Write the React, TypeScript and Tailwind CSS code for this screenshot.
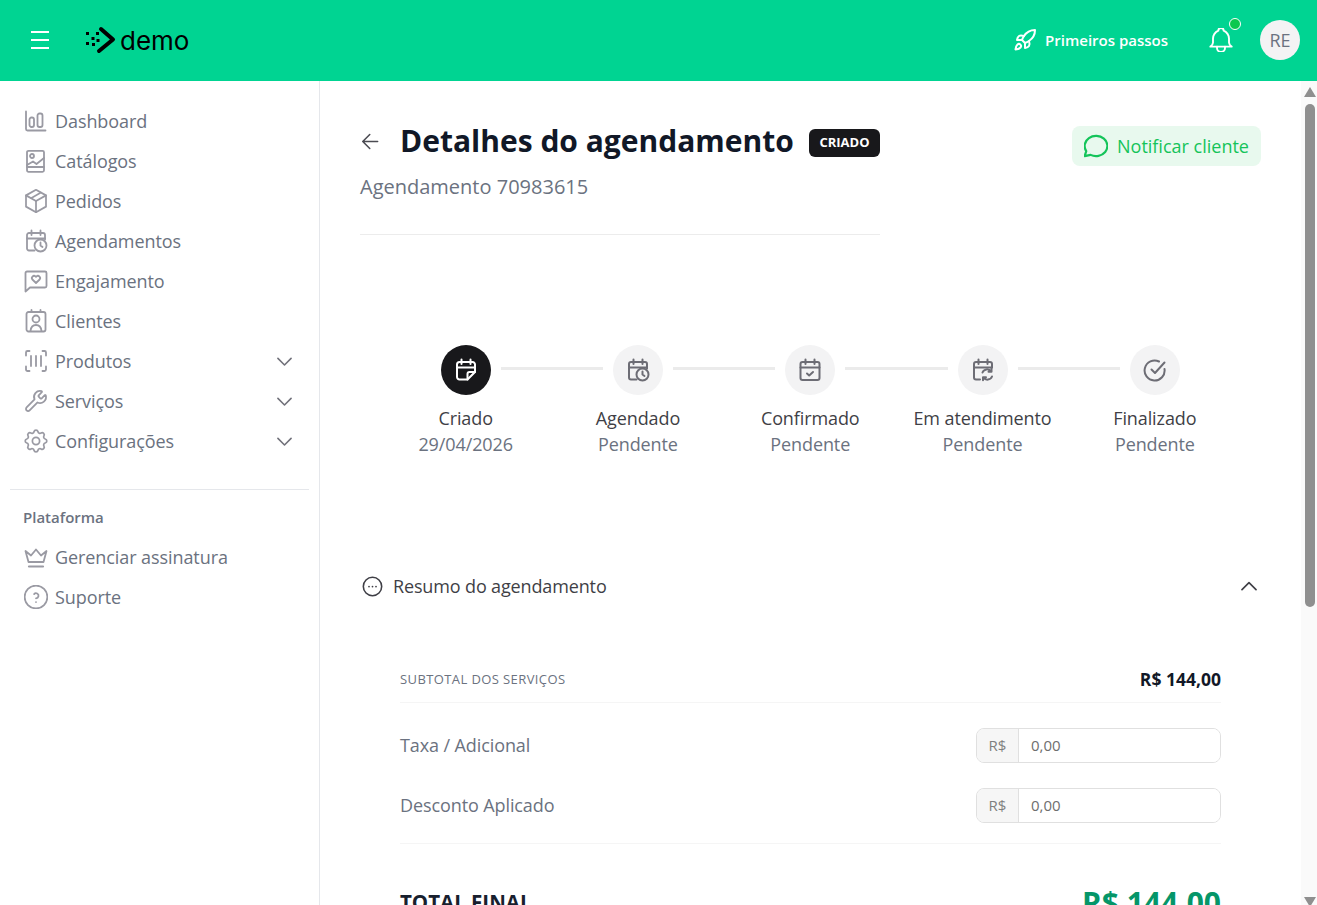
import type { ReactNode } from "react";
import { Rocket, Wrench } from "lucide-react";
import { TbBell, TbHelpCircle, TbMessageCircle, TbPackage, TbSettings } from "react-icons/tb";

type IconProps = { className?: string };

function Svg({ className, sw = 1.8, children }: IconProps & { sw?: number; children: ReactNode }) {
  return (
    <svg viewBox="0 0 24 24" fill="none" stroke="currentColor" strokeWidth={sw} strokeLinecap="round" strokeLinejoin="round" className={className}>
      {children}
    </svg>
  );
}

const DashboardIcon = ({ className }: IconProps) => (
  <Svg className={className}>
    <path d="M2 2.500v17.500a1.500 1.500 0 0 0 1.500 1.500H21.500" />
    <rect x="5.500" y="8.500" width="4.500" height="9.500" rx="2" />
    <rect x="13.500" y="4.500" width="5" height="13.500" rx="2" />
  </Svg>
);

const CatalogIcon = ({ className }: IconProps) => (
  <Svg className={className}>
    <rect x="3" y="1.800" width="17" height="21" rx="1.500" />
    <path d="M3 18h17" />
    <path d="M3 16l6-3.500 3.500 2.500 7.500-6" />
    <circle cx="8" cy="7" r="2" />
  </Svg>
);

const PackageIcon = ({ className }: IconProps) => <TbPackage viewBox="2.400 2.400 19.200 19.200" strokeWidth={1.4} className={className} />;
const SettingsIcon = ({ className }: IconProps) => <TbSettings viewBox="2 2 20 20" strokeWidth={1.45} className={className} />;
const HelpIcon = ({ className }: IconProps) => <TbHelpCircle viewBox="2.500 2.500 19 19" strokeWidth={1.4} className={className} />;
const WrenchIcon = ({ className }: IconProps) => <Wrench strokeWidth={1.8} className={className} />;

const CalendarClockIcon = ({ className }: IconProps) => (
  <Svg className={className}>
    <path d="M10.500 21.500H5a2 2 0 0 1-2-2V6a2 2 0 0 1 2-2h14a2 2 0 0 1 2 2v4.500" />
    <path d="M7.500 1.500V6M16.500 1.500V6M3 9.500h18" />
    <circle cx="16.500" cy="16.500" r="6" />
    <path d="M16.500 13.500v3l2 1.500" />
  </Svg>
);

const CalendarRepeatIcon = ({ className }: IconProps) => (
  <Svg className={className}>
    <path d="M9 21.500H5a2 2 0 0 1-2-2V6a2 2 0 0 1 2-2h14a2 2 0 0 1 2 2v3.500" />
    <path d="M7.500 1.500V6M16.500 1.500V6M3 9.500h18" />
    <path d="M11.500 14.500a4.800 4.800 0 0 1 8.500-1M20.500 10.800v3h-3" />
    <path d="M21 18.500a4.800 4.800 0 0 1-8.500 1M12 22.300v-3h3" />
  </Svg>
);

const CalendarUserIcon = ({ className }: IconProps) => (
  <Svg className={className}>
    <rect x="2.500" y="3" width="19" height="19.500" rx="2" />
    <path d="M7.500 1v2M16.500 1v2" />
    <circle cx="12" cy="10" r="3.500" />
    <path d="M6.500 22c.4-4 2.500-6 5.500-6s5.100 2 5.500 6" />
  </Svg>
);

const MessageHeartIcon = ({ className }: IconProps) => (
  <Svg className={className}>
    <path d="M1.500 22.500V4a1.500 1.500 0 0 1 1.500-1.500h18A1.500 1.500 0 0 1 22.500 4v13a1.500 1.500 0 0 1-1.500 1.500H6z" />
    <path d="M12 14l-3.600-3.500a2.200 2.200 0 0 1 3.100-3.100l.5.5.5-.5a2.200 2.200 0 0 1 3.100 3.100z" />
  </Svg>
);

const BarcodeIcon = ({ className }: IconProps) => (
  <Svg className={className}>
    <path d="M5.500 2H3.500A1.500 1.500 0 0 0 2 3.500v3M18.500 2h2A1.500 1.500 0 0 1 22 3.500v3M5.500 22H3.500A1.500 1.500 0 0 1 2 20.500v-3M18.500 22h2a1.500 1.500 0 0 0 1.500-1.500v-3" />
    <path d="M7 7v10M12 7v10M17 7v10" />
  </Svg>
);

const CrownIcon = ({ className }: IconProps) => (
  <Svg className={className}>
    <path d="M5 21.500h14" strokeWidth={2.200} />
    <path d="M4.500 17h15L22.500 6 17 10.500 12 4.500 7 10.500 1.500 6z" />
  </Svg>
);

const CalendarNoteIcon = ({ className }: IconProps) => (
  <Svg className={className}>
    <path d="M13.500 21.500H5.500a2.500 2.500 0 0 1-2.500-2.500V6.500A2.500 2.500 0 0 1 5.500 4h13A2.500 2.500 0 0 1 21 6.500V14z" />
    <path d="M7.500 1.500V6M16.500 1.500V6M3 9.500h18M21 14h-5.500a2 2 0 0 0-2 2v5.500" />
  </Svg>
);

const CalendarCheckIcon = ({ className }: IconProps) => (
  <Svg className={className}>
    <rect x="2.500" y="4" width="19" height="18" rx="2" />
    <path d="M7.500 1.500V6M16.500 1.500V6M2.500 9.500h19M9 15.500l2.200 2 3.800-3.500" />
  </Svg>
);

const CircleCheckIcon = ({ className }: IconProps) => (
  <Svg className={className}>
    <path d="M21.500 11a10 10 0 1 1-5.500-7.500" />
    <path d="M8.500 11.500l3.500 3.500 9.500-10.500" />
  </Svg>
);

const ArrowLeftIcon = ({ className }: IconProps) => (
  <Svg className={className}>
    <path d="M2 12H19M10 4 2 12l8 8" />
  </Svg>
);

const Chevron = ({ className, up }: IconProps & { up?: boolean }) => (
  <Svg className={className} sw={2.500}>
    <path d={up ? "M1.500 17.500 12 7l10.500 10.500" : "M1.500 7 12 17.500 22.500 7"} />
  </Svg>
);

const navItems = [
  { label: "Dashboard", icon: DashboardIcon },
  { label: "Catálogos", icon: CatalogIcon },
  { label: "Pedidos", icon: PackageIcon },
  { label: "Agendamentos", icon: CalendarClockIcon },
  { label: "Engajamento", icon: MessageHeartIcon },
  { label: "Clientes", icon: CalendarUserIcon },
  { label: "Produtos", icon: BarcodeIcon, more: true },
  { label: "Serviços", icon: WrenchIcon, more: true },
  { label: "Configurações", icon: SettingsIcon, more: true },
];

const platformItems = [
  { label: "Gerenciar assinatura", icon: CrownIcon },
  { label: "Suporte", icon: HelpIcon },
];

const steps = [
  { label: "Criado", detail: "29/04/2026", icon: CalendarNoteIcon, active: true },
  { label: "Agendado", detail: "Pendente", icon: CalendarClockIcon },
  { label: "Confirmado", detail: "Pendente", icon: CalendarCheckIcon },
  { label: "Em atendimento", detail: "Pendente", icon: CalendarRepeatIcon },
  { label: "Finalizado", detail: "Pendente", icon: CircleCheckIcon },
];

function NavRow({ label, icon: Icon, more }: { label: string; icon: (p: IconProps) => ReactNode; more?: boolean }) {
  return (
    <a className="flex h-10 items-center pr-[27px] pl-6 text-lg tracking-[-0.08px] text-[#6b7280]">
      <Icon className="size-6 shrink-0 text-[#9a9aa3]" />
      <span className="ml-[7px] flex-1">{label}</span>
      {more && <Chevron className="size-[15px] text-[#71717a]" />}
    </a>
  );
}

function Header() {
  return (
    <header className="flex h-[81px] shrink-0 items-center bg-[#00d492] pr-[17px] pb-px pl-[30px]">
      <svg viewBox="0 0 20 18" className="h-[18px] w-5 text-white" fill="none" stroke="currentColor" strokeWidth={2}>
        <path d="M1 1h18M1 9h18M1 17h18" />
      </svg>
      <div className="ml-[36px] flex items-center">
        <svg viewBox="0 0 30 28" className="h-7 w-[30px] text-black">
          <g fill="currentColor">
            <rect x="0" y="6" width="3" height="3" />
            <rect x="0" y="16" width="3" height="3" />
            <rect x="5.500" y="11" width="3" height="3" />
            <rect x="6" y="17" width="3" height="3" />
            <rect x="10" y="6" width="3" height="3" />
            <rect x="10.500" y="13" width="3" height="3" />
          </g>
          <path d="M15 3 27 13.500 13 25" fill="none" stroke="currentColor" strokeWidth={4} strokeLinecap="round" strokeLinejoin="round" />
        </svg>
        <span className="mt-[1px] ml-[4px] font-['Inter',sans-serif] text-[26px] leading-none text-black">demo</span>
      </div>
      <div className="ml-auto flex items-center">
        <Rocket strokeWidth={2} className="size-6 text-white" />
        <span className="ml-[8px] text-[15px] font-semibold text-white">Primeiros passos</span>
        <div className="relative ml-[41px]">
          <TbBell viewBox="3 3 18 18" strokeWidth={1.4} className="size-6 text-white" />
          <span className="absolute -top-[10px] -right-[8px] size-3 rounded-full border border-white bg-[#0bc84f]" />
        </div>
        <div className="ml-[27px] flex size-10 items-center justify-center rounded-full bg-[#f3f3f4] text-lg text-[#6b7280]">RE</div>
      </div>
    </header>
  );
}

function Sidebar() {
  return (
    <aside className="w-[320px] shrink-0 border-r border-[#e5e7eb] bg-white pt-5">
      <nav>
        {navItems.map((item) => (
          <NavRow key={item.label} {...item} />
        ))}
      </nav>
      <div className="mx-[10px] mt-[28px] border-t border-[#e5e7eb] pt-[17px]">
        <p className="pl-[13px] text-[15px] leading-[21px] font-semibold text-[#6b7280]">Plataforma</p>
      </div>
      <div className="mt-[9px]">
        {platformItems.map((item) => (
          <NavRow key={item.label} {...item} />
        ))}
      </div>
    </aside>
  );
}

function Stepper() {
  return (
    <ol className="mt-[110px] mr-5 ml-[19.5px] flex tracking-[-0.1px]">
      {steps.map((step, i) => {
        const Icon = step.icon;
        return (
          <li key={step.label} className="flex flex-1 flex-col items-center">
            <div className="flex w-full items-center">
              <span className={`mr-[10px] mb-1 h-[3px] flex-1 ${i > 0 ? "bg-[#ebebeb]" : ""}`} />
              <span className={`flex size-[50px] items-center justify-center rounded-full ${step.active ? "bg-[#18181b] text-white" : "bg-[#f3f3f4] text-[#6d6d75]"}`}>
                <Icon className="size-6 [&_*]:[stroke-width:2]" />
              </span>
              <span className={`mb-1 ml-[10px] h-[3px] flex-1 ${i < steps.length - 1 ? "bg-[#ebebeb]" : ""}`} />
            </div>
            <p className="mt-[10px] text-lg leading-[26px] text-[#3f3f46]">{step.label}</p>
            <p className="text-lg leading-[26px] text-[#6b7280]">{step.detail}</p>
          </li>
        );
      })}
    </ol>
  );
}

function MoneyField({ label }: { label: string }) {
  return (
    <div className="flex h-[35px] items-center justify-between">
      <span className="mb-[2px] text-lg tracking-[-0.1px] text-[#6b7280]">{label}</span>
      <div className="flex h-[35px] w-[245px] overflow-hidden rounded-lg border border-[#e0e0e0] text-[15px]">
        <span className="flex w-[42px] items-center justify-center border-r border-[#e0e0e0] bg-[#f6f6f6] text-[#808080]">R$</span>
        <input readOnly value="0,00" className="min-w-0 flex-1 bg-white pl-3 text-[#6e6e6e] outline-none" />
      </div>
    </div>
  );
}

function Summary() {
  return (
    <section className="mt-[114px]">
      <div className="flex h-[30px] items-center pr-1 pl-[2px]">
        <Svg className="size-[21px] text-[#3f3f46]">
          <circle cx="12" cy="12" r="10.500" />
          <path d="M8 12h.01M12 12h.01M16 12h.01" strokeWidth={2} />
        </Svg>
        <h2 className="ml-[10px] flex-1 text-lg tracking-[-0.14px] text-[#3f3f46]">Resumo do agendamento</h2>
        <Chevron up className="size-4 text-[#3f3f46]" />
      </div>
      <div className="mx-10 mt-[65px]">
        <div className="flex h-[37px] items-start justify-between border-b border-[#f5f5f5]">
          <span className="mt-1 text-[13px] tracking-[0.4px] text-[#6b7280] uppercase">Subtotal dos serviços</span>
          <span className="mt-px text-[17.5px] leading-6 font-bold text-[#111827]">R$ 144,00</span>
        </div>
        <div className="mt-[25px] flex flex-col gap-[25px] border-b border-[#f5f5f5] pb-5">
          <MoneyField label="Taxa / Adicional" />
          <MoneyField label="Desconto Aplicado" />
        </div>
        <div className="mt-[39px] flex items-center justify-between pb-[340px]">
          <span className="mb-[2px] text-[20.5px] font-bold text-[#18202e] uppercase">Total final</span>
          <span className="text-[30px] leading-[40px] font-bold text-[#059669]">R$ 144,00</span>
        </div>
      </div>
    </section>
  );
}

function ScrollRail() {
  return (
    <div className="flex w-4 shrink-0 flex-col items-center overflow-hidden bg-[#fafafa] pt-[6px] pl-[2px]">
      <span className="h-0 w-0 shrink-0 border-x-[6px] border-b-[10px] border-x-transparent border-b-[#8f8f8f]" />
      <span className="mt-[7px] h-[503px] w-[10px] shrink-0 rounded-full bg-[#8f8f8f]" />
      <span className="mt-[290px] h-0 w-0 shrink-0 border-x-[6px] border-t-[10px] border-x-transparent border-t-[#8f8f8f]" />
    </div>
  );
}

export default function App() {
  return (
    <div className="flex h-screen flex-col overflow-hidden bg-white font-['Open_Sans',sans-serif]">
      <Header />
      <div className="flex min-h-0 flex-1">
        <Sidebar />
        <main className="min-w-0 flex-1 overflow-y-auto px-10 pt-[45px]">
          <div className="flex items-start justify-between">
            <div className="w-[520px] border-b border-[#ececec] pb-[33px]">
              <div className="flex h-[30px] items-center">
                <ArrowLeftIcon className="ml-px size-[21px] text-[#4b4b52]" />
                <h1 className="ml-[18px] text-[30px] leading-[30px] font-bold text-[#111827]">Detalhes do agendamento</h1>
                <span className="mt-1 ml-auto rounded-md bg-[#18181b] px-[10.5px] pt-1 pb-[6px] text-[13px] leading-[18px] font-bold text-white">CRIADO</span>
              </div>
              <p className="mt-[17px] text-xl text-[#6b7280]">Agendamento 70983615</p>
            </div>
            <button className="flex h-10 w-[189px] items-center justify-center gap-[9px] rounded-lg bg-[#e8f9ee] text-lg text-[#14c45a]">
              <TbMessageCircle viewBox="2.500 2.500 19 19" strokeWidth={1.7} className="size-6" />
              Notificar cliente
            </button>
          </div>
          <Stepper />
          <Summary />
        </main>
        <ScrollRail />
      </div>
    </div>
  );
}
